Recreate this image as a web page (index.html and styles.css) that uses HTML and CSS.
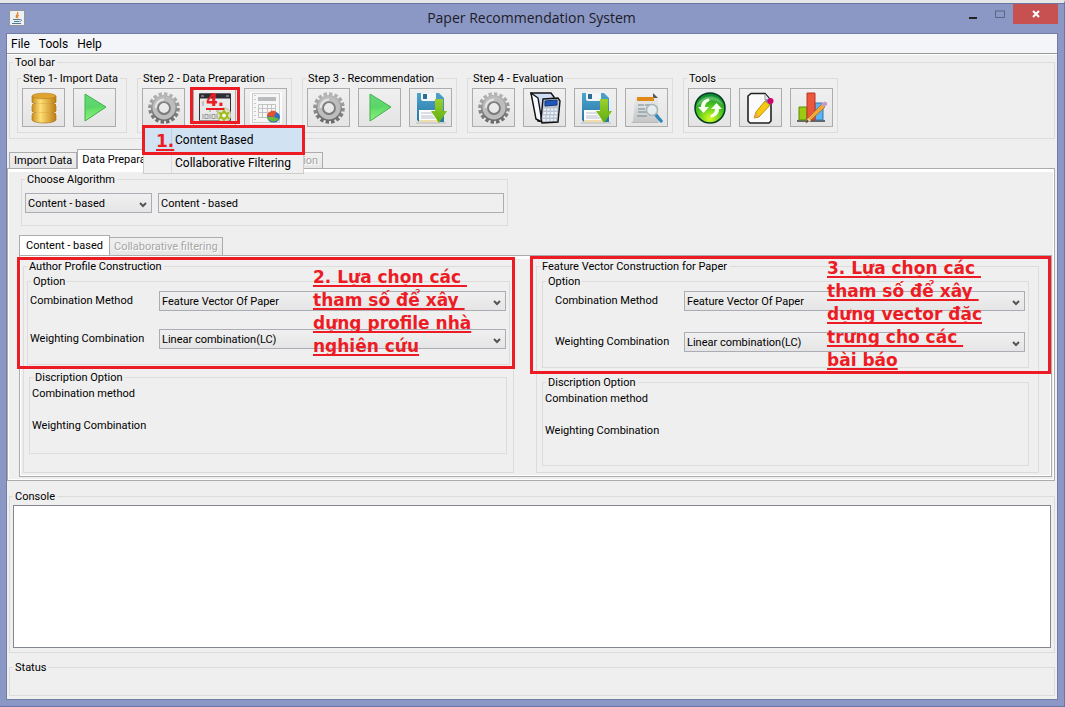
FILE: index.html
```html
<!DOCTYPE html>
<html lang="en">
<head>
<meta charset="utf-8">
<title>Paper Recommendation System</title>
<link rel="stylesheet" href="styles.css">
</head>
<body>
<svg class="defs" aria-hidden="true">
  <defs>
    <linearGradient id="silver" x1="0" y1="0" x2="0" y2="1"><stop offset="0" stop-color="#b4b4b4"/><stop offset="1" stop-color="#6c6c6c"/></linearGradient>
    <linearGradient id="gold"><stop offset="0" stop-color="#c98d1f"/><stop offset=".35" stop-color="#ffdf78"/><stop offset="1" stop-color="#bd7c12"/></linearGradient>
    <linearGradient id="leaf" x1="0" y1="0" x2="0" y2="1"><stop offset="0" stop-color="#7be08a"/><stop offset=".5" stop-color="#5fdc66"/><stop offset="1" stop-color="#8df07c"/></linearGradient>
    <linearGradient id="sea" x1="0" y1="0" x2="0" y2="1"><stop offset="0" stop-color="#4fa3cb"/><stop offset="1" stop-color="#2477a6"/></linearGradient>
    <linearGradient id="arrow" x1="0" y1="0" x2="0" y2="1"><stop offset="0" stop-color="#9bd02c"/><stop offset="1" stop-color="#5fae10"/></linearGradient>
    <linearGradient id="sheet" x1="0" y1="0" x2="0" y2="1"><stop offset="0" stop-color="#f0f0f0"/><stop offset="1" stop-color="#c6c6c6"/></linearGradient>
    <radialGradient id="ball" cx=".5" cy=".85" r=".85"><stop offset="0" stop-color="#d8fa20"/><stop offset=".5" stop-color="#4fc81e"/><stop offset="1" stop-color="#08803c"/></radialGradient>
    <symbol id="i-gear" viewBox="0 0 32 32">
      <circle cx="16" cy="16" r="13.500" fill="none" stroke="url(#silver)" stroke-width="4.600" pathLength="64" stroke-dasharray="2.500 1.500"/>
      <circle cx="16" cy="16" r="9.200" fill="none" stroke="url(#silver)" stroke-width="7.600"/>
      <circle cx="16" cy="16" r="9.200" fill="none" stroke="#bdbdbd" stroke-width="4.500"/>
      <circle cx="16" cy="16" r="5.800" fill="none" stroke="#7d7d7d" stroke-width="1.600"/>
      <path d="M7.500 16a8.500 8.500 0 0 1 8.500-8.500" fill="none" stroke="#e6e6e6" stroke-width="2"/>
    </symbol>
    <symbol id="i-play" viewBox="0 0 32 32">
      <path d="M6 2v27l21-14z" fill="url(#leaf)" stroke="#3fae49" stroke-linejoin="round"/>
      <path d="M7 17c7 0 10-2 17-3L7 3z" fill="#56cf6a" opacity=".55"/>
    </symbol>
    <symbol id="i-db" viewBox="0 0 32 32">
      <path d="M4 23v5c2 4 22 4 24 0v-5zM4 14v5c2 4 22 4 24 0v-5zM4 4v6c2 4 22 4 24 0V4z" fill="url(#gold)" stroke="#a36c12" stroke-width=".6"/>
      <ellipse cx="16" cy="23" rx="12" ry="2.6" fill="#d89e32"/><ellipse cx="16" cy="14" rx="12" ry="2.6" fill="#d89e32"/>
      <path d="M4 21v3c2 4 22 4 24 0v-3M4 12v3c2 4 22 4 24 0v-3" fill="url(#gold)"/>
      <ellipse cx="16" cy="4" rx="12" ry="2.8" fill="#dfa32f" stroke="#b37a18" stroke-width=".6"/>
    </symbol>
    <symbol id="i-binary" viewBox="0 0 32 32">
      <rect x=".5" y="2" width="31" height="27" rx="1" fill="#e9e9e9" stroke="#333"/>
      <rect y="1.500" width="32" height="5" fill="#2b2c34"/><path d="M2 4h3m22 0h3" stroke="#bbb"/>
      <g stroke="#999" stroke-width="1" fill="none"><path d="M4 9v5M4 22v5M11 22v5M18 22v5M11 16v4M18 16v4"/><rect x="6" y="22.500" width="3" height="4"/><rect x="13" y="22.500" width="3" height="4"/></g>
      <circle cx="25" cy="23" r="7" fill="#d8e4bd" stroke="#b4bd9c"/>
      <path d="M25 16.500l2 4 4-.5-2.300 3.500 2.300 3.500-4-.5-2 4-2-4-4 .5 2.300-3.500L19 20l4 .5z" fill="#a3b81c"/><circle cx="25" cy="23.500" r="2" fill="#f5f8e6"/>
    </symbol>
    <symbol id="i-report" viewBox="0 0 32 32">
      <rect width="32" height="32" fill="#fbfbfb"/>
      <rect x="2.500" y="1.500" width="27" height="29" fill="#f6f6f6" stroke="#ccc"/>
      <path d="M5 3v26" stroke="#999" stroke-dasharray="1 3"/>
      <path d="M8 5h18v4H8z" fill="#b9bbbe"/>
      <path d="M8.500 12.500h17v13h-17zM8 16.500h18M8 20.500h18M12.500 12v14M17.500 12v14M21.500 12v14" fill="none" stroke="#c2c2c2"/>
      <ellipse cx="23.500" cy="25" rx="6.500" ry="5.500" fill="#2f6fbe"/><path d="M17 24c1-6 8-6 9-4l-2 5z" fill="#e8512b"/><path d="M17 25h7l5 2c-3 4-11 3-12-2z" fill="#69b83b"/>
    </symbol>
    <symbol id="i-save" viewBox="0 0 32 32">
      <path d="M1 31h30" stroke="#bbb" stroke-width="1"/>
      <path d="M2 1h22l5 5v24H4l-2-2z" fill="url(#sea)"/>
      <path d="M6 1h15v6c0 1-1 2-2 2H8c-1 0-2-1-2-2z" fill="#f3f6f8"/><path d="M8 2h4v5H8z" fill="#2b6d93"/>
      <path d="M4 18h21v10H4z" fill="#fff"/><path d="M6 21h15M6 24h12M6 26h14" stroke="#b8bccb"/><path d="M4 28h21v2H4z" fill="#f0ddae"/>
      <path d="M20 7h8v12h4l-8 12-8-12h4z" fill="url(#arrow)"/>
    </symbol>
    <symbol id="i-calc" viewBox="0 0 32 32">
      <path d="M2 1h20l3 4-3 25-13-1z" fill="#cfdcf8" stroke="#111" stroke-width="1.400"/>
      <path d="M2 1l7 5 4 24-6-3z" fill="#f8faff" stroke="#111" stroke-width="1.400" stroke-linejoin="round"/>
      <path d="M14 7l15-1 2 3-2 21-16 1-1-4z" fill="#b8c3d2" stroke="#111" stroke-width="1.400"/>
      <path d="M16 9l12-1v5l-12 1z" fill="#1b57bd" stroke="#173a75"/>
      <path d="M14.500 17.500h14M14.500 21h13.500M14 24.500h13.500M14 28h13" stroke="#eef2f8" stroke-width="2.200" stroke-dasharray="2.500 1.200"/>
    </symbol>
    <symbol id="i-search" viewBox="0 0 32 32">
      <path d="M0 31l4-3h20l4 3z" fill="#999" opacity=".6"/>
      <path d="M5 1h17l5 5v24H2L4 6z" fill="url(#sheet)"/><path d="M22 1l5 5h-5z" fill="#555"/>
      <path d="M6 5h17v4H6z" fill="#df8a17"/><path d="M7 13h6M7 17h7M7 20h9M6 24h10M14 13h5" stroke="#6b8995"/>
      <path d="M25 23l5 6" stroke="#3189bb" stroke-width="3.500" stroke-linecap="round"/>
      <circle cx="21" cy="18" r="5.500" fill="#e9f1f3" fill-opacity=".8" stroke="#a9b6ba" stroke-width="1.500"/>
    </symbol>
    <symbol id="i-refresh" viewBox="0 0 32 32">
      <circle cx="16" cy="16" r="15" fill="url(#ball)" stroke="#083c20" stroke-width="1.500"/>
      <path d="M3 14C5 3 24 0 29 13 20 5 10 8 3 14z" fill="#bdf0bc" opacity=".35"/>
      <path d="M15 6.500C10 7 7 10.500 7 15H4l5.500 6 5.500-6h-4c0-3 1.500-5 4.500-6zM17 25.500c5-.5 8-4 8-8.500h3l-5.500-6-5.500 6h4c0 3-1.500 5-4.500 6z" fill="#f7fff0"/>
    </symbol>
    <symbol id="i-edit" viewBox="0 0 32 32">
      <path d="M6 1.500h14l6 7V29l-2 2H5l-2-2V4z" fill="#fbfbfd" stroke="#222" stroke-width="1.600"/>
      <path d="M20 2v6h5" fill="#e7e7f0" stroke="#999"/>
      <path d="M9 26l2-6L20 9l5 4-11 12z" fill="#f6c90e" stroke="#c18f0c"/><path d="M9 26l2-5 3 3z" fill="#e8a866"/>
      <path d="M20 9l2-2 5 4-2 2z" fill="#7785a8"/><circle cx="25.500" cy="9" r="3" fill="#d2006e"/>
    </symbol>
    <symbol id="i-chart" viewBox="0 0 32 32">
      <path d="M1 29h28" stroke="#666" stroke-width="2"/>
      <path d="M3 15h8v13H3z" fill="#9bcb10" stroke="#5c8a0c"/><path d="M19 11h8v17h-8z" fill="#5db4f0" stroke="#2c79b5"/><path d="M11 1h8v27h-8z" fill="#ee553d" stroke="#b93726"/>
      <path d="M10 31l2-5L26 12l3 3-14 13z" fill="#f5a838" stroke="#9a672b" stroke-width=".8"/><path d="M10 31l2-5 3 3z" fill="#f4d9ab"/><path d="M10 31l1-3 2 1z" fill="#333"/><path d="M25 12l3-2c2-1 4 1 3 3l-3 2z" fill="#c79ac6"/>
    </symbol>
    <symbol id="i-chev" viewBox="0 0 8 6"><path d="M1 1l3 3 3-3" fill="none" stroke="#555" stroke-width="2"/></symbol>
  </defs>
</svg>

<div class="window">
  <header class="titlebar">
    <svg class="java" viewBox="0 0 16 16" aria-hidden="true">
      <rect x=".5" y=".5" width="15" height="15" fill="#eef0f1" stroke="#8f979d"/>
      <path d="M8.500 2c2 2-3 3-1 6M10 5c-2 1-2 2-1 3" fill="none" stroke="#e8862c" stroke-width="1.300"/>
      <path d="M4 9.500h7M5 11.500h5M3 13.500h9M11.500 9.500c2 0 1 2-1 2" fill="none" stroke="#4d7896"/>
    </svg>
    <h1>Paper Recommendation System</h1>
    <div class="controls">
      <button type="button" class="min" aria-label="Minimize"><svg width="8" height="10" aria-hidden="true"><path d="M0 9h8" stroke="#222" stroke-width="2"/></svg></button>
      <button type="button" class="max" aria-label="Maximize"><svg width="10" height="8" aria-hidden="true"><path d="M.5 1v6.500h9V1M0 1h10" fill="none" stroke="#5c6482"/></svg></button>
      <button type="button" class="close" aria-label="Close"><svg width="8" height="8" aria-hidden="true"><path d="M1 1l6 6M7 1L1 7" stroke="#fff" stroke-width="2"/></svg></button>
    </div>
  </header>

  <main class="client">
    <nav class="menubar">
      <button type="button">File</button><button type="button">Tools</button><button type="button">Help</button>
    </nav>

    <fieldset class="toolbar">
      <legend>Tool bar</legend>
      <div class="groups">
        <fieldset class="group import">
          <legend>Step 1- Import Data</legend>
          <div class="buttons">
            <button type="button" aria-label="Data source"><svg><use href="#i-db"/></svg></button>
            <button type="button" aria-label="Run import"><svg><use href="#i-play"/></svg></button>
          </div>
        </fieldset>
        <fieldset class="group">
          <legend>Step 2 - Data Preparation</legend>
          <div class="buttons">
            <button type="button" aria-label="Settings"><svg><use href="#i-gear"/></svg></button>
            <button type="button" aria-label="Process data"><svg><use href="#i-binary"/></svg></button>
            <button type="button" aria-label="Report"><svg><use href="#i-report"/></svg></button>
          </div>
          <strong class="mark mark-4">4.</strong>
          <div class="popup">
            <button type="button" class="active">Content Based</button>
            <button type="button">Collaborative Filtering</button>
            <strong class="mark mark-1">1.</strong>
          </div>
        </fieldset>
        <fieldset class="group">
          <legend>Step 3 - Recommendation</legend>
          <div class="buttons">
            <button type="button" aria-label="Settings"><svg><use href="#i-gear"/></svg></button>
            <button type="button" aria-label="Run recommendation"><svg><use href="#i-play"/></svg></button>
            <button type="button" aria-label="Save result"><svg><use href="#i-save"/></svg></button>
          </div>
        </fieldset>
        <fieldset class="group">
          <legend>Step 4 - Evaluation</legend>
          <div class="buttons">
            <button type="button" aria-label="Settings"><svg><use href="#i-gear"/></svg></button>
            <button type="button" aria-label="Calculate"><svg><use href="#i-calc"/></svg></button>
            <button type="button" aria-label="Save evaluation"><svg><use href="#i-save"/></svg></button>
            <button type="button" aria-label="View evaluation"><svg><use href="#i-search"/></svg></button>
          </div>
        </fieldset>
        <fieldset class="group">
          <legend>Tools</legend>
          <div class="buttons">
            <button type="button" aria-label="Refresh"><svg><use href="#i-refresh"/></svg></button>
            <button type="button" aria-label="Edit"><svg><use href="#i-edit"/></svg></button>
            <button type="button" aria-label="Chart"><svg><use href="#i-chart"/></svg></button>
          </div>
        </fieldset>
      </div>
    </fieldset>

    <div class="tabs outer-tabs">
      <button type="button" class="tab">Import Data</button>
      <button type="button" class="tab selected prep">Data Preparation</button>
      <button type="button" class="tab last" disabled>Recommendation</button>
    </div>
    <section class="panel outer">
      <fieldset class="choose">
        <legend>Choose Algorithm</legend>
        <div class="choose-row">
          <span class="combo algorithm"><select aria-label="Algorithm"><option>Content - based</option></select><svg><use href="#i-chev"/></svg></span>
          <input type="text" value="Content - based" aria-label="Selected algorithm" readonly>
        </div>
      </fieldset>

      <div class="tabs inner-tabs">
        <button type="button" class="tab selected">Content - based</button>
        <button type="button" class="tab" disabled>Collaborative filtering</button>
      </div>
      <section class="panel inner">
        <fieldset class="profile">
          <legend>Author Profile Construction</legend>
          <fieldset class="option">
            <legend>Option</legend>
            <div class="row">
              <label for="a-method">Combination Method</label>
              <span class="combo"><select id="a-method"><option>Feature Vector Of Paper</option></select><svg><use href="#i-chev"/></svg></span>
            </div>
            <div class="row">
              <label for="a-weight">Weighting Combination</label>
              <span class="combo"><select id="a-weight"><option>Linear combination(LC)</option></select><svg><use href="#i-chev"/></svg></span>
            </div>
          </fieldset>
          <fieldset class="description">
            <legend>Discription Option</legend>
            <p>Combination method</p>
            <p>Weighting Combination</p>
          </fieldset>
          <strong class="mark note note-2"><span>2. Lựa chọn các&nbsp;<br>tham số để xây&nbsp;<br>dựng profile nhà<br>nghiên cứu</span></strong>
        </fieldset>

        <fieldset class="feature">
          <legend>Feature Vector Construction for Paper</legend>
          <fieldset class="option">
            <legend>Option</legend>
            <div class="row">
              <label for="f-method">Combination Method</label>
              <span class="combo"><select id="f-method"><option>Feature Vector Of Paper</option></select><svg><use href="#i-chev"/></svg></span>
            </div>
            <div class="row">
              <label for="f-weight">Weighting Combination</label>
              <span class="combo"><select id="f-weight"><option>Linear combination(LC)</option></select><svg><use href="#i-chev"/></svg></span>
            </div>
          </fieldset>
          <fieldset class="description">
            <legend>Discription Option</legend>
            <p>Combination method</p>
            <p>Weighting Combination</p>
          </fieldset>
          <strong class="mark note note-3"><span>3. Lựa chọn các&nbsp;<br>tham số để xây&nbsp;<br>dựng vector đặc<br>trưng cho các&nbsp;<br>bài báo</span></strong>
        </fieldset>
      </section>
    </section>

    <fieldset class="console">
      <legend>Console</legend>
      <textarea aria-label="Console" readonly></textarea>
    </fieldset>
    <fieldset class="status">
      <legend>Status</legend>
    </fieldset>
  </main>
</div>
</body>
</html>
```
FILE: styles.css
```css
* { box-sizing: border-box; }

body {
  margin: 0;
  background: #e9e9e9;
  color: #000;
  font: 11px/14px Roboto, "Noto Sans", sans-serif;
}

.defs { position: absolute; width: 0; height: 0; }

button, input, select, textarea {
  margin: 0;
  padding: 0;
  border: 0;
  border-radius: 0;
  background: none;
  color: inherit;
  font: inherit;
}

/* --pad is the left padding; the legend keeps the same distance from the border */
fieldset {
  --pad: 0px;
  position: relative;
  min-width: 0;
  margin: 0;
  padding: 0 0 0 var(--pad);
  border: 1px solid #dcdcdc;
}

legend {
  height: 14px;
  margin-left: calc(3px - var(--pad));
  padding: 0 2px;
  line-height: 16px;
}

p { margin: 0; }

/* Window frame */
.window {
  display: flex;
  flex-direction: column;
  min-height: 100vh;
  padding: 0 6px 6px 6px;
  border-top: 3px solid #e6e6e6;
  border-right: 1px solid #6b76a5;
  border-bottom: 1px solid #6b76a5;
  background: #8b97c4;
  box-shadow: inset 0 1px #6b76a5;
}

.titlebar {
  display: grid;
  grid-template-columns: 1fr auto 1fr;
  align-items: center;
  height: 30px;
  padding-left: 3px;
}

.titlebar .java { width: 16px; height: 16px; }

.titlebar h1 {
  margin: 0;
  padding-right: 4px;
  color: #1c1c28;
  font: 14px/20px "Open Sans", sans-serif;
}

.controls {
  display: flex;
  align-self: start;
  justify-content: flex-end;
  padding-top: 1px;
}

.controls button {
  display: grid;
  place-items: center;
  width: 27px;
  height: 20px;
}

.controls .close { width: 45px; background: #c75050; }

.client {
  display: flex;
  flex: 1;
  flex-direction: column;
  padding: 0 2px 2px 1px;
  border: 1px solid #737ca5;
  background: #efefef;
}

.menubar {
  display: flex;
  gap: 9px;
  height: 20px;
  margin: 0 -2px 0 -1px;
  padding-left: 4px;
  border-bottom: 1px solid #999;
  background: #f4f5f8;
  box-shadow: 0 1px #fff;
  font: 12px/18px Roboto, sans-serif;
}

/* Toolbar */
.toolbar {
  margin: 1px 0 0 1px;
  padding-bottom: 5px;
}

.groups { display: flex; gap: 10px; padding: 2px 7px 0; }
.group { --pad: 4px; padding-right: 4px; padding-bottom: 5px; }
.group.import { min-width: 110px; }
.buttons { display: flex; gap: 8px; padding-top: 3px; }

.buttons button {
  display: grid;
  place-items: center;
  width: 43px;
  height: 39px;
  border: 1px solid #acacac;
  background: linear-gradient(#f0f0f0, #e4e4e4);
}

.buttons svg { width: 32px; height: 32px; }

.popup {
  position: absolute;
  z-index: 2;
  top: 41px;
  left: 5px;
  width: 161px;
  border: 1px solid #ccc;
  background: linear-gradient(90deg, #f0f0f0 27px, #ddd 27px, #ddd 28px, #f0f0f0 28px);
  font: 12px/20px Roboto, sans-serif;
}

.popup button {
  display: block;
  width: 100%;
  height: 20px;
  padding-left: 31px;
  text-align: left;
}

.popup .active {
  height: 26px;
  border: 1px solid #78aee5;
  padding-left: 30px;
  background: linear-gradient(90deg, #d1e2f2 26px, #b9cfe4 26px, #b9cfe4 27px, #d1e2f2 27px);
}

/* Red annotations */
.mark {
  position: absolute;
  z-index: 3;
  border: 3px solid #ed1c24;
  color: #ed1c24;
  font: bold 17px/23px "DejaVu Sans", "Noto Sans", sans-serif;
  text-decoration: underline;
  text-decoration-thickness: 2px;
  text-underline-offset: 2px;
  text-decoration-skip-ink: none;
  white-space: nowrap;
  pointer-events: none;
}

.mark-4 { top: 2px; left: 52px; width: 50px; height: 37px; padding-left: 13px; line-height: 20px; }
.mark-1 { top: -2px; left: -2px; width: 163px; height: 30px; padding-left: 11px; line-height: 26px; }
.note span { display: block; }
.note-2 { top: -16px; right: -2px; left: -7px; height: 112px; padding: 6px 0 0 293px; }
.note-3 { top: -17px; right: -13px; left: -7px; height: 118px; padding-left: 294px; }
.note-3 span { margin-top: -2px; }

/* Tabs */
.tabs { display: flex; align-items: flex-end; }

.tab {
  height: 17px;
  padding: 0 4px;
  border: 1px solid #acacac;
  border-bottom: 0;
  background: linear-gradient(#f0f0f0, #e6e6e6);
}

.tab + .tab { border-left: 0; }
.tab.selected { z-index: 1; height: 20px; padding: 0 6px; border-left: 1px solid #acacac; background: #fff; }
.tab:disabled { color: #a6a6a6; text-shadow: 1px 1px #fff; }

.outer-tabs { height: 20px; margin: 10px 0 0 1px; }
.outer-tabs .prep { width: 110px; padding: 0 4px; text-align: left; }
.outer-tabs .last { width: 136px; text-align: right; }

.panel {
  border: 1px solid #acacac;
  box-shadow: inset 1px 3px #fff, inset -1px -1px #fff;
}

.outer { margin-top: -1px; margin-left: -1px; padding: 3px 2px 3px 11px; }

.choose { --pad: 3px; width: 487px; margin-left: 2px; padding-right: 3px; padding-bottom: 12px; }
.choose-row { display: flex; gap: 6px; padding-top: 7px; }
.choose input { flex: 1; height: 20px; padding: 0 2px; border: 1px solid #abadb3; }

.combo { display: grid; flex: 1; align-items: center; min-width: 0; }
.combo select, .combo svg { grid-area: 1 / 1; }

.combo select {
  width: 100%;
  height: 20px;
  padding: 1px 20px 0 2px;
  border: 1px solid #acacb4;
  background: linear-gradient(#f0f0f0, #e5e5e5);
  appearance: none;
}

.combo svg { justify-self: end; width: 8px; height: 6px; margin: 3px 5px 0 0; pointer-events: none; }
.combo.algorithm { flex: none; width: 127px; }

.inner-tabs { height: 20px; margin-top: 9px; }
.inner-tabs .tab:disabled { height: 18px; }

.inner {
  display: grid;
  grid-template-columns: 491fr 22px 503fr 12px;
  padding: 3px 0 3px 3px;
}

.inner .feature { grid-column: 3; }

.row { display: flex; align-items: center; }
.row label { width: 129px; line-height: 16px; }

.profile { --pad: 3px; padding-top: 1px; padding-right: 3px; padding-bottom: 18px; }
.profile .option { --pad: 2px; height: 91px; padding-top: 3px; padding-right: 3px; }
.profile .row + .row { margin-top: 18px; }
.profile .description { --pad: 2px; height: 84px; margin: 5px 3px 0 2px; }

.feature { --pad: 5px; padding-top: 1px; padding-right: 9px; padding-bottom: 6px; }
.feature .option { --pad: 12px; height: 94px; padding-top: 3px; padding-right: 3px; }
.feature .row + .row { margin-top: 21px; }
.feature .description { --pad: 2px; height: 91px; margin-top: 7px; }

.option + .description { padding-top: 1px; }
.description p { line-height: 18px; }
.description p + p { margin-top: 14px; }

/* Output areas */
.console { --pad: 3px; margin: 8px 0 0 1px; padding-top: 2px; padding-right: 3px; padding-bottom: 4px; }

.console textarea {
  display: block;
  width: 100%;
  height: calc(100vh - 564px);
  min-height: 100px;
  border: 1px solid #828790;
  background: #fff;
  resize: none;
}

.status { height: 36px; margin: 7px 0 0 1px; }
```
